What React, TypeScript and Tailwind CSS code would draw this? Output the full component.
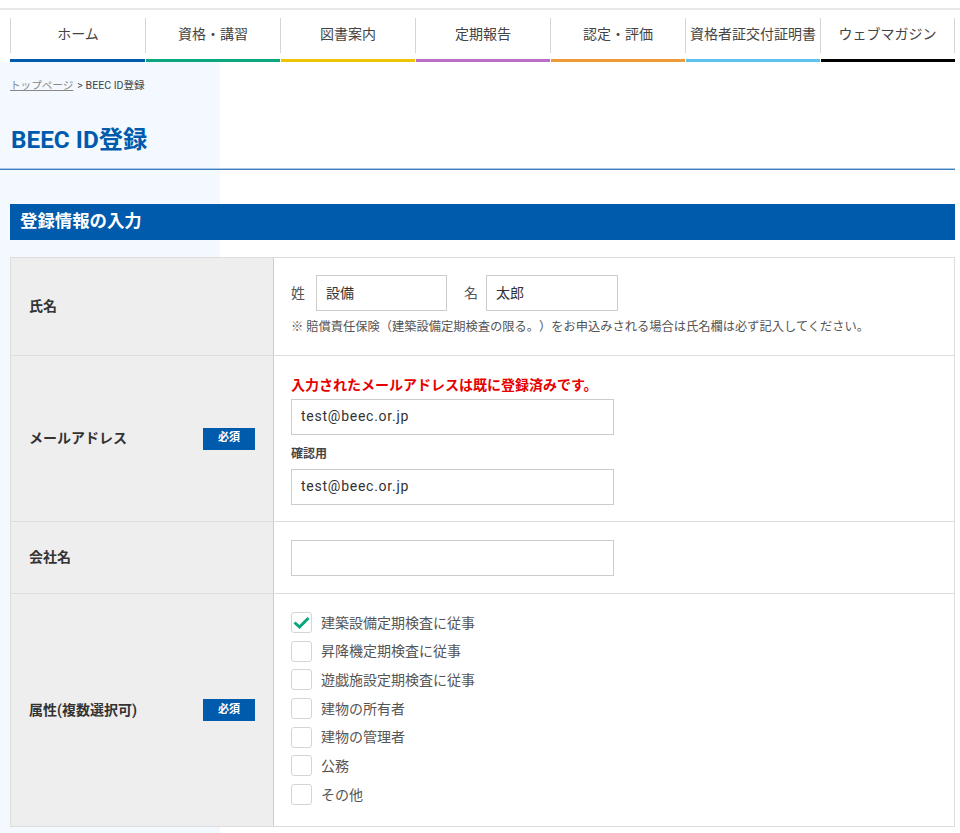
import React from 'react';

const navItems = [
  { label: 'ホーム', bar: 'bg-[#005bac]' },
  { label: '資格・講習', bar: 'bg-[#0aa77f]' },
  { label: '図書案内', bar: 'bg-[#eec400]' },
  { label: '定期報告', bar: 'bg-[#b96fc6]' },
  { label: '認定・評価', bar: 'bg-[#ef9a38]' },
  { label: '資格者証交付証明書', bar: 'bg-[#5cc3ee]' },
  { label: 'ウェブマガジン', bar: 'bg-black' },
];

const attributes = [
  { label: '建築設備定期検査に従事', checked: true },
  { label: '昇降機定期検査に従事', checked: false },
  { label: '遊戯施設定期検査に従事', checked: false },
  { label: '建物の所有者', checked: false },
  { label: '建物の管理者', checked: false },
  { label: '公務', checked: false },
  { label: 'その他', checked: false },
];

function Required() {
  return (
    <span className="flex h-[22px] w-[52px] items-center justify-center bg-[#005bac] text-[11px] font-bold text-white">
      必須
    </span>
  );
}

function TextInput({ value, className }: { value: string; className: string }) {
  return (
    <input
      type="text"
      defaultValue={value}
      className={`h-[36px] border border-[#ccc] bg-white px-[9px] text-[14px] text-[#333] outline-none ${className}`}
    />
  );
}

function Row({
  title,
  required,
  bodyClass,
  last,
  children,
}: {
  title: string;
  required?: boolean;
  bodyClass: string;
  last?: boolean;
  children: React.ReactNode;
}) {
  return (
    <div className={`flex ${last ? '' : 'border-b border-[#ddd]'}`}>
      <div className="flex w-[263px] shrink-0 items-center justify-between border-r border-[#ccc] bg-[#eeeeee] pl-[18px] pr-[18px]">
        <span className="text-[14px] font-bold text-[#333]">{title}</span>
        {required && <Required />}
      </div>
      <div className={`flex-1 bg-white pl-[17px] ${bodyClass}`}>{children}</div>
    </div>
  );
}

export default function App() {
  return (
    <div
      className="min-h-[833px] w-[960px] bg-white text-[#333] [text-spacing-trim:space-all]"
      style={{ fontFamily: 'Roboto, "Noto Sans CJK JP", sans-serif' }}
    >
      <div className="h-[10px] border-b-2 border-[#e8e8e8]" />

      <nav className="ml-[10px] flex w-[945px] pt-[8px]">
        {navItems.map((item, i) => (
          <div key={item.label} className="w-[135px]">
            <div
              className={`flex h-[35px] items-center justify-center whitespace-nowrap border-l border-[#d5d5d5] pb-[2px] text-[14px] text-[#444] ${
                i === 6 ? 'border-r' : ''
              }`}
            >
              {item.label}
            </div>
            <div className={`mt-[6px] h-[3px] ${item.bar} ${i === 0 ? '' : 'ml-px'}`} />
          </div>
        ))}
      </nav>

      <div className="bg-[linear-gradient(to_right,#f3f9ff_220px,#ffffff_220px)] pb-[6px]">
        <div className="flex h-[49px] items-center pb-[1px] pl-[10px] text-[10.6px] text-[#444]">
          <a className="text-[#888] underline">トップページ</a>
          <span className="ml-[4px]">&gt; BEEC ID登録</span>
        </div>

        <div className="pb-[6px] pl-[11px] pt-[6px]">
          <h1 className="h-[45px] text-[24.3px] font-bold leading-[45px] text-[#005bac]">BEEC ID登録</h1>
        </div>
        <div className="h-px w-[955px] bg-[#a9c6e4]" />
        <div className="h-px w-[955px] bg-[#3f7fc0]" />

        <div className="ml-[10px] mr-[5px] mt-[34px] flex h-[36px] items-center bg-[#005bac] pb-[2px] pl-[10px] text-[17.4px] font-bold text-white">
          登録情報の入力
        </div>

        <div className="ml-[10px] mt-[17px] w-[945px] border border-[#ddd]">
          <Row title="氏名" bodyClass="h-[97px] pt-[17px]">
            <div className="flex items-center text-[14px] text-[#555]">
              <span>姓</span>
              <TextInput value="設備" className="ml-[11px] w-[131px] pb-[3px]" />
              <span className="ml-[17px]">名</span>
              <TextInput value="太郎" className="ml-[8px] w-[132px] pb-[3px]" />
            </div>
            <p className="mt-[7px] whitespace-nowrap text-[12.25px] leading-[18px] text-[#555]">
              ※ 賠償責任保険（建築設備定期検査の限る。）をお申込みされる場合は氏名欄は必ず記入してください。
            </p>
          </Row>

          <Row title="メールアドレス" required bodyClass="h-[165px] pt-[20px]">
            <p className="text-[14px] font-bold leading-[19px] text-[#e60000]">入力されたメールアドレスは既に登録済みです。</p>
            <TextInput value="test@beec.or.jp" className="mt-[4px] block w-[323px] pb-[2px] tracking-[0.75px]" />
            <p className="mt-[11px] text-[12px] font-bold leading-[16px] text-[#444]">確認用</p>
            <TextInput value="test@beec.or.jp" className="mt-[7px] block w-[323px] pb-[2px] tracking-[0.75px]" />
          </Row>

          <Row title="会社名" bodyClass="h-[71px] pt-[18px]">
            <TextInput value="" className="block w-[323px]" />
          </Row>

          <Row title="属性(複数選択可)" required last bodyClass="h-[232px] pt-[18px]">
            <div className="flex flex-col gap-[7.7px]">
              {attributes.map((attr) => (
                <label key={attr.label} className="flex h-[21px] items-center text-[14px] text-[#555]">
                  <span className="flex h-[21px] w-[21px] items-center justify-center rounded-[3px] border border-[#d5d5d5] bg-white">
                    {attr.checked && (
                      <svg width="17" height="13" viewBox="0 0 17 13" fill="none">
                        <path d="M1.5 6.5 L6.5 11 L15.5 2" stroke="#0aa77f" strokeWidth="3" />
                      </svg>
                    )}
                  </span>
                  <span className="ml-[9px] pt-[1px]">{attr.label}</span>
                </label>
              ))}
            </div>
          </Row>
        </div>
      </div>
    </div>
  );
}
